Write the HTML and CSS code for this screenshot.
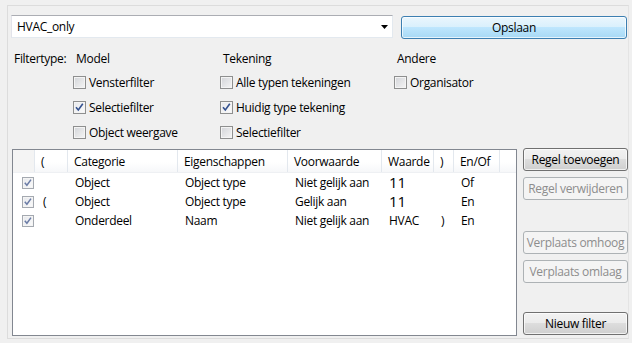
FILE: index.html
```html
<!DOCTYPE html>
<html lang="nl">
<head>
  <meta charset="UTF-8">
  <title>Filter</title>
  <link rel="stylesheet" href="styles.css">
</head>
<body>
  <div class="panel">
    <div class="top">
      <div class="combo">
        <span>HVAC_only</span>
        <svg class="arrow" width="7" height="4" viewBox="0 0 7 4"><path d="M0 0H7L3.5 4Z" fill="#000"/></svg>
      </div>
      <button class="btn primary save">Opslaan</button>
    </div>

    <div class="filters">
      <div class="ftype">Filtertype:</div>
      <div class="group">Model</div>
      <div class="group">Tekening</div>
      <div class="group">Andere</div>

      <div></div>
      <label class="opt"><span class="check"></span>Vensterfilter</label>
      <label class="opt"><span class="check"></span>Alle typen tekeningen</label>
      <label class="opt"><span class="check"></span>Organisator</label>

      <div></div>
      <label class="opt"><span class="check on"><svg width="11" height="11" viewBox="0 0 11 11"><path d="M2 5.2L4.3 8L8.8 1.8" fill="none" stroke="#34518f" stroke-width="1.6"/></svg></span>Selectiefilter</label>
      <label class="opt"><span class="check on"><svg width="11" height="11" viewBox="0 0 11 11"><path d="M2 5.2L4.3 8L8.8 1.8" fill="none" stroke="#34518f" stroke-width="1.6"/></svg></span>Huidig type tekening</label>
      <div></div>

      <div></div>
      <label class="opt"><span class="check"></span>Object weergave</label>
      <label class="opt"><span class="check"></span>Selectiefilter</label>
      <div></div>
    </div>

    <div class="main">
      <div class="list">
        <div class="head">
          <div class="hc first"></div>
          <div class="hc">(</div>
          <div class="hc">Categorie</div>
          <div class="hc">Eigenschappen</div>
          <div class="hc">Voorwaarde</div>
          <div class="hc">Waarde</div>
          <div class="hc">)</div>
          <div class="hc">En/Of</div>
          <div class="hc last"></div>
        </div>
        <div class="row">
          <div class="cell"><span class="check small on"><svg width="10" height="10" viewBox="0 0 10 10"><path d="M1.8 4.8L3.9 7.3L8 1.6" fill="none" stroke="#6b7ca6" stroke-width="1.5"/></svg></span></div>
          <div class="cell"></div>
          <div class="cell">Object</div>
          <div class="cell">Object type</div>
          <div class="cell">Niet gelijk aan</div>
          <div class="cell big">11</div>
          <div class="cell"></div>
          <div class="cell">Of</div>
          <div class="cell"></div>
        </div>
        <div class="row">
          <div class="cell"><span class="check small on"><svg width="10" height="10" viewBox="0 0 10 10"><path d="M1.8 4.8L3.9 7.3L8 1.6" fill="none" stroke="#6b7ca6" stroke-width="1.5"/></svg></span></div>
          <div class="cell paren">(</div>
          <div class="cell">Object</div>
          <div class="cell">Object type</div>
          <div class="cell">Gelijk aan</div>
          <div class="cell big">11</div>
          <div class="cell"></div>
          <div class="cell">En</div>
          <div class="cell"></div>
        </div>
        <div class="row">
          <div class="cell"><span class="check small on"><svg width="10" height="10" viewBox="0 0 10 10"><path d="M1.8 4.8L3.9 7.3L8 1.6" fill="none" stroke="#6b7ca6" stroke-width="1.5"/></svg></span></div>
          <div class="cell"></div>
          <div class="cell">Onderdeel</div>
          <div class="cell">Naam</div>
          <div class="cell">Niet gelijk aan</div>
          <div class="cell">HVAC</div>
          <div class="cell">)</div>
          <div class="cell">En</div>
          <div class="cell"></div>
        </div>
      </div>

      <div class="side">
        <button class="btn">Regel toevoegen</button>
        <button class="btn off near">Regel verwijderen</button>
        <button class="btn off far">Verplaats omhoog</button>
        <button class="btn off near">Verplaats omlaag</button>
        <button class="btn bottom">Nieuw filter</button>
      </div>
    </div>
  </div>
</body>
</html>
```

FILE: styles.css
```css
body {
  margin: 0;
  background: #f0f0f0;
  font-family: "Segoe UI", "Open Sans", sans-serif;
  font-size: 12px;
  letter-spacing: -0.3px;
  color: #000;
}
.panel {
  box-sizing: border-box;
  margin: 5px 3px 0 7px;
  height: 334px;
  border: 1px solid #dcdcdc;
  border-right-color: #e4e4e4;
}
.top {
  display: flex;
  padding: 9px 0 0 3px;
}
.combo {
  box-sizing: border-box;
  width: 382px;
  height: 23px;
  display: flex;
  align-items: center;
  justify-content: space-between;
  padding: 0 5px;
  background: #fff;
  border: 1px solid #abadb3;
  border-color: #abadb3 #e3e9ef #e3e9ef #e2e3ea;
}
.arrow {
  margin-right: -1px;
}
.btn {
  box-sizing: border-box;
  height: 23px;
  width: 105px;
  padding: 0;
  font: inherit;
  letter-spacing: inherit;
  color: #000;
  border: 1px solid #707070;
  border-radius: 3px;
  background: linear-gradient(#f2f2f2, #ebebeb 50%, #dddddd 50%, #cfcfcf);
  box-shadow: inset 0 0 0 1px rgba(255, 255, 255, 0.7);
}
.btn.primary {
  border-color: #3c7fb1;
  background: linear-gradient(#eaf6fd, #d9f0fc 50%, #bee6fd 50%, #a7d9f5);
}
.save {
  width: 226px;
  margin: 1px 0 0 8px;
}
.btn.off {
  color: #8d8d8d;
  border-color: #adb2b5;
  background: #f4f4f4;
  box-shadow: none;
}
.filters {
  display: grid;
  grid-template-columns: 59px 147px 174px 1fr;
  grid-template-rows: 23px 25px 25px 25px;
  margin: 8px 0 0 6px;
  align-items: center;
}
.group {
  padding-left: 3px;
}
.opt {
  display: flex;
  align-items: center;
}
.check {
  box-sizing: border-box;
  width: 13px;
  height: 13px;
  margin-right: 3px;
  display: flex;
  align-items: center;
  justify-content: center;
  border: 1px solid #8e8f8f;
  box-shadow: inset 0 0 0 1px #f4f4f4;
  background: linear-gradient(135deg, #d2d4d8, #f5f5f5);
}
.check.on {
  background: linear-gradient(135deg, #e6e8ec, #fbfbfb);
}
.check.small {
  width: 12px;
  height: 12px;
  margin: 0;
  border-color: #a4a9b0;
}
.main {
  display: flex;
  gap: 6px;
  margin: 3px 0 0 4px;
}
.list {
  box-sizing: border-box;
  width: 505px;
  height: 187px;
  margin-top: 1px;
  background: #fff;
  border: 1px solid #828790;
}
.head, .row {
  display: grid;
  grid-template-columns: 22px 33px 110px 110px 94px 52px 20px 46px 1fr;
}
.head {
  height: 23px;
  box-sizing: border-box;
  background: linear-gradient(#fff, #fff 55%, #f6f7f9);
  border-bottom: 1px solid #eef0f3;
}
.hc {
  display: flex;
  align-items: center;
  padding-left: 6px;
  border-right: 1px solid #e3e8ee;
}
.hc.first {
  background: #f4f4f4;
}
.hc.last {
  border-right: none;
}
.row {
  height: 19px;
}
.cell {
  display: flex;
  align-items: center;
  padding-left: 7px;
  white-space: nowrap;
  line-height: 1;
}
.cell:first-child {
  padding-left: 9px;
}
.cell.paren {
  padding-left: 8px;
}
.cell.big {
  font-size: 15px;
  letter-spacing: 0;
}
.side {
  display: flex;
  flex-direction: column;
  height: 188px;
}
.near {
  margin-top: 6px;
}
.far {
  margin-top: 31px;
}
.bottom {
  margin-top: auto;
  margin-bottom: 1px;
}
```
